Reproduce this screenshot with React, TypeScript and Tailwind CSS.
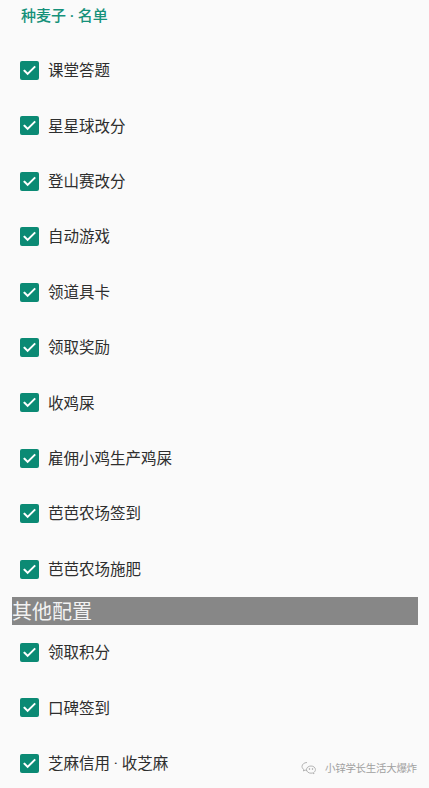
import React from "react";

const groupA = [
  "课堂答题",
  "星星球改分",
  "登山赛改分",
  "自动游戏",
  "领道具卡",
  "领取奖励",
  "收鸡屎",
  "雇佣小鸡生产鸡屎",
  "芭芭农场签到",
  "芭芭农场施肥",
];

const groupB = ["领取积分", "口碑签到", "芝麻信用 · 收芝麻"];

function Check() {
  return (
    <div className="w-[19px] h-[19px] rounded-[2px] bg-[#0b8a74] flex items-center justify-center shrink-0">
      <svg width="15" height="15" viewBox="0 0 24 24" fill="none">
        <path d="M4 12.5l5 5L20 6.5" stroke="white" strokeWidth="3.2" strokeLinecap="square" strokeLinejoin="miter" />
      </svg>
    </div>
  );
}

function Row({ label }: { label: string }) {
  return (
    <div className="h-[55.4px] flex items-center pl-[20px] gap-[9px]">
      <Check />
      <span className="pt-[3px] text-[15.5px] leading-none text-[#2e2e2e]">{label}</span>
    </div>
  );
}

export default function App() {
  return (
    <div
      className="relative w-[429px] h-[788px] overflow-hidden bg-[#fafafa]"
      style={{ fontFamily: 'Roboto, "Noto Sans CJK SC", sans-serif' }}
    >
      <div className="h-[31px] flex items-center pl-[21px]">
        <span className="pt-[2px] text-[15px] font-medium leading-none text-[#15917a]">种麦子 · 名单</span>
      </div>
      <div className="mt-[11.8px]">
        {groupA.map((l) => (
          <Row key={l} label={l} />
        ))}
      </div>
      <div className="ml-[12px] w-[406px] h-[28px] bg-[#878787] flex items-center">
        <span className="pt-[2px] text-[20px] leading-none text-[#f2f2f2]">其他配置</span>
      </div>
      <div>
        {groupB.map((l) => (
          <Row key={l} label={l} />
        ))}
      </div>
      <div className="absolute left-[301px] top-[761px] flex items-center gap-[8px] opacity-80">
        <svg width="16" height="14" viewBox="0 0 32 28" fill="none" stroke="#9a9a9a" strokeWidth="1.8">
          <path d="M12 3C6.5 3 2 6.6 2 11c0 2.5 1.4 4.6 3.6 6.1L4.8 20l3.4-1.8c1.2.4 2.5.6 3.8.6" />
          <path d="M20 10c-5 0-9 3.2-9 7.2s4 7.2 9 7.2c1 0 2-.1 2.9-.4l3 1.6-.7-2.6c2.2-1.3 3.7-3.4 3.7-5.8 0-4-4-7.2-8.9-7.2z" />
          <circle cx="17" cy="16" r="0.9" fill="#9a9a9a" />
          <circle cx="23" cy="16" r="0.9" fill="#9a9a9a" />
        </svg>
        <span className="pt-[2px] text-[10.5px] leading-none text-[#8a8a8a] tracking-[-0.3px]">小锌学长生活大爆炸</span>
      </div>
    </div>
  );
}
